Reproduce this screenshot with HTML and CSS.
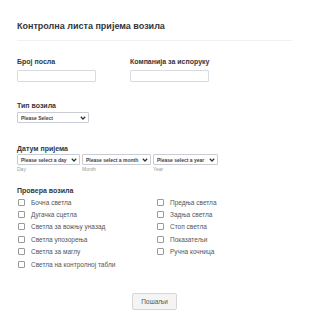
FILE: index.html
```html
<!DOCTYPE html>
<html>
<head>
    <meta charset="UTF-8" />
    <title>Контролна листа</title>
    <link rel="stylesheet" href="styles.css">
</head>
<body>
    <!-- form -->
    <div class="form">
      <div class="header">Контролна листа пријема возила</div>

      <div class="row two">
        <div class="field">
          <div class="label">Број посла</div>
          <div class="input"></div>
        </div>
        <div class="field">
          <div class="label">Компанија за испоруку</div>
          <div class="input"></div>
        </div>
      </div>

      <div class="row type-row">
        <div class="label">Тип возила</div>
        <div class="select type">
          <span>Please Select</span>
          <svg width="6" height="4" viewBox="0 0 6 4"><path d="M0.8 0.8 L3 3 L5.2 0.8" fill="none" stroke="#333" stroke-width="1.3"/></svg>
        </div>
      </div>

      <div class="row date-row">
        <div class="label">Датум пријема</div>
        <div class="dates">
          <div class="date">
            <div class="select day">
              <span>Please select a day</span>
              <svg width="6" height="4" viewBox="0 0 6 4"><path d="M0.8 0.8 L3 3 L5.2 0.8" fill="none" stroke="#333" stroke-width="1.3"/></svg>
            </div>
            <div class="sub">Day</div>
          </div>
          <div class="date">
            <div class="select month">
              <span>Please select a month</span>
              <svg width="6" height="4" viewBox="0 0 6 4"><path d="M0.8 0.8 L3 3 L5.2 0.8" fill="none" stroke="#333" stroke-width="1.3"/></svg>
            </div>
            <div class="sub">Month</div>
          </div>
          <div class="date">
            <div class="select year">
              <span>Please select a year</span>
              <svg width="6" height="4" viewBox="0 0 6 4"><path d="M0.8 0.8 L3 3 L5.2 0.8" fill="none" stroke="#333" stroke-width="1.3"/></svg>
            </div>
            <div class="sub">Year</div>
          </div>
        </div>
      </div>

      <div class="row check-row">
        <div class="label">Провера возила</div>
        <div class="checks">
          <div class="check"><span class="box"></span>Бочна светла</div>
          <div class="check"><span class="box"></span>Предња светла</div>
          <div class="check"><span class="box"></span>Дугачка сцетла</div>
          <div class="check"><span class="box"></span>Задња светла</div>
          <div class="check"><span class="box"></span>Светла за вожњу уназад</div>
          <div class="check"><span class="box"></span>Стоп светла</div>
          <div class="check"><span class="box"></span>Светла упозорења</div>
          <div class="check"><span class="box"></span>Показатељи</div>
          <div class="check"><span class="box"></span>Светла за маглу</div>
          <div class="check"><span class="box"></span>Ручна кочница</div>
          <div class="check"><span class="box"></span>Светла на контролној табли</div>
        </div>
      </div>

      <div class="actions">
        <button class="submit">Пошаљи</button>
      </div>
    </div>
</body>
</html>
```

FILE: styles.css
```css
/* page */
body {
margin: 0;
background: #fff;
font-family: "Liberation Sans", Arial, sans-serif;
color: #33363d;
}

.form {
padding: 0 18px 0 17px;
}

.header {
margin-top: 20px;
padding-bottom: 8px;
border-bottom: 1px solid #f1f1f3;
font-size: 9px;
line-height: 12px;
font-weight: bold;
}

.row {
margin-top: 16px;
}

.row.two {
display: grid;
grid-template-columns: 113px 1fr;
}

.row.type-row {
margin-top: 19px;
}

.row.date-row {
margin-top: 21px;
}

.row.check-row {
margin-top: 13px;
}

.label {
font-size: 7px;
line-height: 9px;
font-weight: bold;
margin-bottom: 2px;
}

.field .label {
margin-bottom: 4px;
}

.date-row .label {
margin-bottom: 1px;
}

.input {
width: 77px;
height: 10px;
border: 1px solid #d8dae0;
border-radius: 1px;
}

/* selects */
.select {
display: flex;
justify-content: space-between;
align-items: center;
height: 9px;
padding: 0 2px 0 3px;
border: 1px solid #c9ccd4;
border-radius: 1px;
font-size: 5px;
font-weight: bold;
color: #444;
background: #fff;
white-space: nowrap;
}

.select.type {
width: 65px;
}

.dates {
display: flex;
gap: 2px;
}

.select.day {
width: 56px;
}

.select.month {
width: 62px;
}

.select.year {
width: 58px;
}

.sub {
font-size: 5px;
line-height: 7px;
color: #999;
margin-top: 1px;
}

/* checkboxes */
.check-row .label {
margin-bottom: 1px;
}

.checks {
display: grid;
grid-template-columns: 139px 1fr;
}

.check {
display: flex;
align-items: center;
height: 12.4px;
font-size: 6.5px;
color: #555;
padding-left: 1px;
}

.box {
width: 5px;
height: 5px;
border: 1px solid #999;
border-radius: 1px;
margin-right: 6px;
}

/* button */
.actions {
display: flex;
justify-content: center;
margin-top: 23px;
}

.submit {
height: 17px;
padding: 0 8px;
border: 1px solid #d6d6d6;
border-radius: 2px;
background: #f4f4f4;
font-family: "Liberation Sans", Arial, sans-serif;
font-size: 6.5px;
color: #555;
}
```
